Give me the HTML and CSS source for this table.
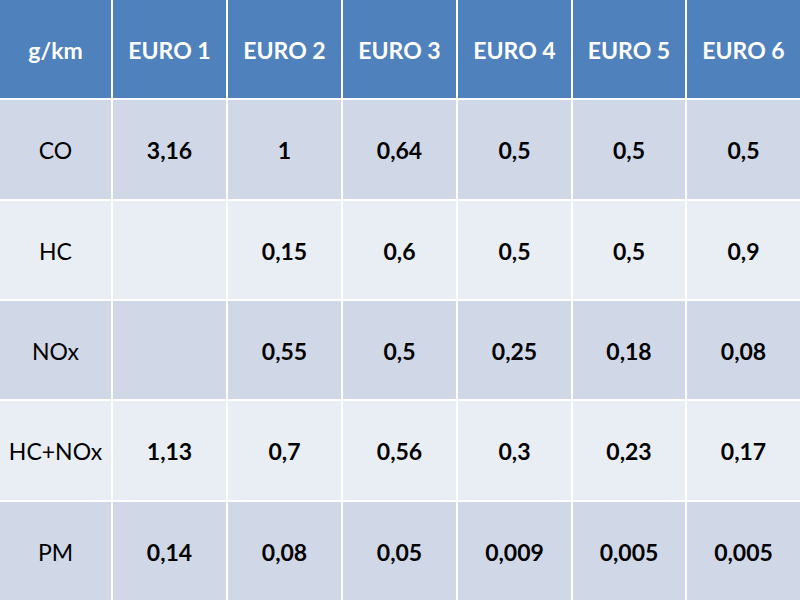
FILE: index.html
```html
<!DOCTYPE html>
<html>
<head>
<meta charset="utf-8">
<link rel="stylesheet" href="styles.css">
</head>
<body>
<div class="table">
  <div class="cell head">g/km</div>
  <div class="cell head">EURO 1</div>
  <div class="cell head">EURO 2</div>
  <div class="cell head">EURO 3</div>
  <div class="cell head">EURO 4</div>
  <div class="cell head">EURO 5</div>
  <div class="cell head">EURO 6</div>

  <div class="cell dark label">CO</div>
  <div class="cell dark">3,16</div>
  <div class="cell dark">1</div>
  <div class="cell dark">0,64</div>
  <div class="cell dark">0,5</div>
  <div class="cell dark">0,5</div>
  <div class="cell dark">0,5</div>

  <div class="cell light label">HC</div>
  <div class="cell light"></div>
  <div class="cell light">0,15</div>
  <div class="cell light">0,6</div>
  <div class="cell light">0,5</div>
  <div class="cell light">0,5</div>
  <div class="cell light">0,9</div>

  <div class="cell dark label">NOx</div>
  <div class="cell dark"></div>
  <div class="cell dark">0,55</div>
  <div class="cell dark">0,5</div>
  <div class="cell dark">0,25</div>
  <div class="cell dark">0,18</div>
  <div class="cell dark">0,08</div>

  <div class="cell light label">HC+NOx</div>
  <div class="cell light">1,13</div>
  <div class="cell light">0,7</div>
  <div class="cell light">0,56</div>
  <div class="cell light">0,3</div>
  <div class="cell light">0,23</div>
  <div class="cell light">0,17</div>

  <div class="cell dark label">PM</div>
  <div class="cell dark">0,14</div>
  <div class="cell dark">0,08</div>
  <div class="cell dark">0,05</div>
  <div class="cell dark">0,009</div>
  <div class="cell dark">0,005</div>
  <div class="cell dark">0,005</div>
</div>
</body>
</html>
```
FILE: styles.css
```css
html, body {
  margin: 0;
  padding: 0;
  background: #ffffff;
}
.table {
  width: 800px;
  height: 600px;
  display: grid;
  grid-template-columns: 111px repeat(4, 113px) 112px 1fr;
  grid-template-rows: repeat(6, 1fr);
  gap: 2px;
  background: #ffffff;
  font-family: Lato, "Liberation Sans", sans-serif;
  font-size: 23px;
}
.cell {
  display: flex;
  align-items: center;
  justify-content: center;
  padding-top: 2px;
  font-weight: 700;
  color: #000000;
}
.head {
  background: #4f81bd;
  color: #ffffff;
}
.dark {
  background: #d0d8e8;
}
.light {
  background: #e9edf4;
}
.label {
  font-weight: 400;
}
```
